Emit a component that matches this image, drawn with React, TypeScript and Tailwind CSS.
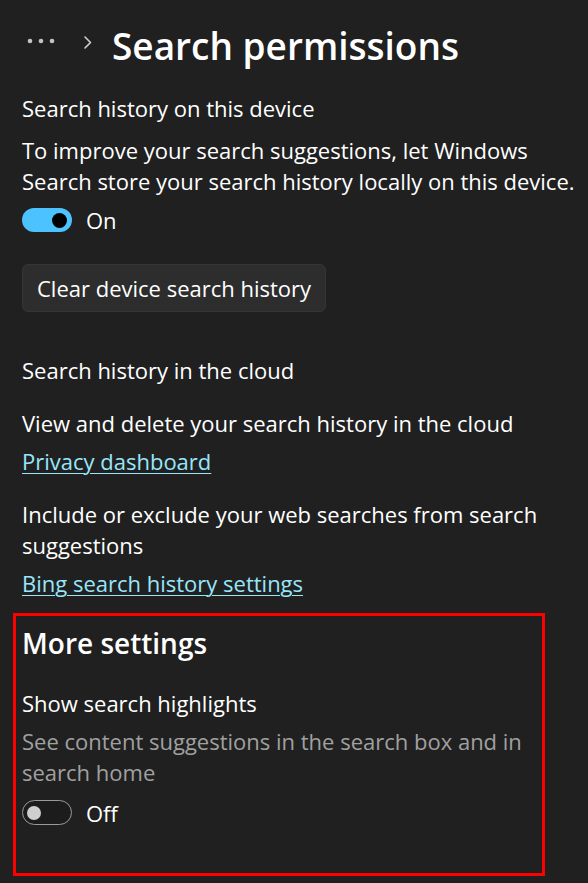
import React from "react";

const font = { fontFamily: '"Open Sans", "Noto Sans", sans-serif' };

function ToggleOn() {
  return (
    <div className="flex items-center h-[24px]">
      <div className="relative w-[50px] h-[24px] rounded-full bg-[#4cc2ff]">
        <div className="absolute right-[5px] top-[4.5px] w-[15px] h-[15px] rounded-full bg-black" />
      </div>
      <span className="ml-[14px] text-[22px] leading-[24px] text-white">On</span>
    </div>
  );
}

function ToggleOff() {
  return (
    <div className="flex items-center h-[25px]">
      <div className="relative w-[50px] h-[25px] rounded-full border border-[#9a9a9a] bg-[#1c1c1c]">
        <div className="absolute left-[3.5px] top-[4.5px] w-[14px] h-[14px] rounded-full bg-[#cfcfcf]" />
      </div>
      <span className="ml-[14px] text-[22px] leading-[24px] text-white">Off</span>
    </div>
  );
}

export default function App() {
  return (
    <div
      className="w-[588px] h-[883px] overflow-hidden bg-[#202020] text-white pl-[22px] pt-[20px]"
      style={font}
    >
      {/* Breadcrumb / title */}
      <div className="flex items-center h-[52px]">
        <svg width="90" height="52" viewBox="0 0 90 52" className="shrink-0">
          <circle cx="8" cy="21" r="2.3" fill="#c4c4c4" />
          <circle cx="19" cy="21" r="2.3" fill="#c4c4c4" />
          <circle cx="30" cy="21" r="2.3" fill="#c4c4c4" />
          <polyline
            points="63,17 68.5,22.5 63,28"
            fill="none"
            stroke="#cfcfcf"
            strokeWidth="1.6"
            strokeLinecap="round"
            strokeLinejoin="round"
          />
        </svg>
        <h1 className="text-[37px] leading-[52px] font-semibold whitespace-nowrap">
          Search permissions
        </h1>
      </div>

      <div className="text-[22px] leading-[31px] whitespace-nowrap">
        <div className="mt-[21px]">Search history on this device</div>
        <div className="mt-[11px]">
          To improve your search suggestions, let Windows
          <br />
          Search store your search history locally on this device.
        </div>
        <div className="mt-[11px]">
          <ToggleOn />
        </div>
        <button className="mt-[32px] flex items-center w-[304px] h-[48px] px-[14px] rounded-[6px] bg-[#2d2d2d] border border-[#353535] text-[22px] leading-[31px] text-white">
          Clear device search history
        </button>

        <div className="mt-[43px]">Search history in the cloud</div>
        <div className="mt-[22px]">View and delete your search history in the cloud</div>
        <div className="mt-[7px]">
          <a className="text-[#99e6fa] underline underline-offset-[3px] decoration-1">
            Privacy dashboard
          </a>
        </div>
        <div className="mt-[22px]">
          Include or exclude your web searches from search
          <br />
          suggestions
        </div>
        <div className="mt-[7px]">
          <a className="text-[#99e6fa] underline underline-offset-[3px] decoration-1">
            Bing search history settings
          </a>
        </div>

        <div className="mt-[14px] -ml-[9px] w-[532px] h-[263px] border-[3px] border-[#ff0000] pl-[6px] pt-[8px]">
          <h2 className="text-[28px] leading-[38px] font-semibold">More settings</h2>
          <div className="mt-[26px]">Show search highlights</div>
          <div className="mt-[7px] text-[#a0a0a0]">
            See content suggestions in the search box and in
            <br />
            search home
          </div>
          <div className="mt-[12px]">
            <ToggleOff />
          </div>
        </div>
      </div>
    </div>
  );
}
